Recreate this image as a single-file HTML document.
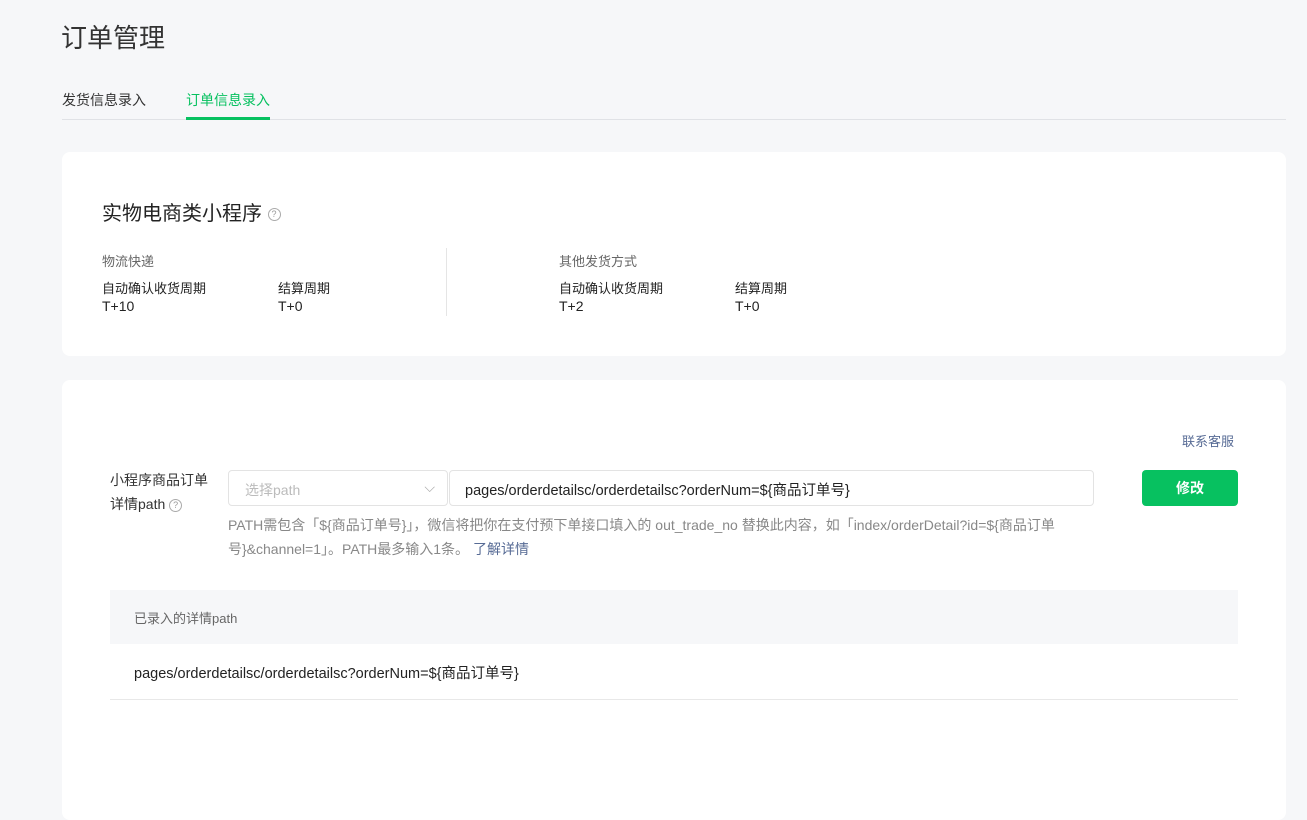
<!DOCTYPE html>
<html><head><meta charset="utf-8"><style>
*{margin:0;padding:0;box-sizing:border-box}
body{width:1307px;height:802px;overflow:hidden;background:#f6f7f9;font-family:"Liberation Sans","Noto Sans CJK SC",sans-serif;color:#222;position:relative}
.a{position:absolute;white-space:nowrap}
.card{position:absolute;background:#fff;border-radius:8px}
.q{display:inline-block;width:13px;height:13px;border:1px solid #aaa;border-radius:50%;font-size:9px;line-height:11px;text-align:center;color:#999;vertical-align:middle}
</style></head><body>
<div class="a" style="left:61px;top:18px;font-size:26px;color:#333">订单管理</div>
<div class="a" style="left:62px;top:90px;font-size:14px;color:#333">发货信息录入</div>
<div class="a" style="left:186px;top:90px;font-size:14px;color:#07c160">订单信息录入</div>
<div class="a" style="left:62px;top:119px;width:1224px;height:1px;background:#e0e2e6"></div>
<div class="a" style="left:186px;top:117px;width:84px;height:3px;background:#07c160"></div>

<div class="card" style="left:62px;top:152px;width:1224px;height:204px"></div>
<div class="a" style="left:102px;top:197px;font-size:20px;color:#222">实物电商类小程序 <span class="q">?</span></div>
<div class="a" style="left:102px;top:251px;font-size:13px;color:#666">物流快递</div>
<div class="a" style="left:102px;top:278px;font-size:13px">自动确认收货周期</div>
<div class="a" style="left:278px;top:278px;font-size:13px">结算周期</div>
<div class="a" style="left:102px;top:298px;font-size:14px">T+10</div>
<div class="a" style="left:278px;top:298px;font-size:14px">T+0</div>
<div class="a" style="left:446px;top:248px;width:1px;height:68px;background:#e5e5e5"></div>
<div class="a" style="left:559px;top:251px;font-size:13px;color:#666">其他发货方式</div>
<div class="a" style="left:559px;top:278px;font-size:13px">自动确认收货周期</div>
<div class="a" style="left:735px;top:278px;font-size:13px">结算周期</div>
<div class="a" style="left:559px;top:298px;font-size:14px">T+2</div>
<div class="a" style="left:735px;top:298px;font-size:14px">T+0</div>

<div class="card" style="left:62px;top:380px;width:1224px;height:440px"></div>
<div class="a" style="left:1182px;top:431px;font-size:13px;color:#576b95">联系客服</div>
<div class="a" style="left:110px;top:468px;font-size:14px;line-height:24px;color:#333;white-space:normal;width:110px">小程序商品订单<br>详情path <span class="q">?</span></div>
<div class="a" style="left:228px;top:470px;width:220px;height:36px;border:1px solid #e3e3e3;border-radius:4px;font-size:14px;color:#bbb;padding:9px 16px">选择path<span style="position:absolute;right:12px;top:8px;color:#aaa">⌵</span></div>
<div class="a" style="left:449px;top:470px;width:645px;height:36px;border:1px solid #e3e3e3;border-radius:4px;font-size:14.5px;color:#222;padding:8px 15px">pages/orderdetailsc/orderdetailsc?orderNum=${商品订单号}</div>
<div class="a" style="left:1142px;top:470px;width:96px;height:36px;background:#07c160;border-radius:4px;color:#fff;font-size:14px;text-align:center;line-height:36px;font-weight:bold">修改</div>
<div class="a" style="left:228px;top:513px;font-size:14px;line-height:24px;color:#888;white-space:normal;width:870px">PATH需包含「${商品订单号}」，微信将把你在支付预下单接口填入的 out_trade_no 替换此内容，如「index/orderDetail?id=${商品订单号}&amp;channel=1」。PATH最多输入1条。 <span style="color:#576b95">了解详情</span></div>
<div class="a" style="left:110px;top:590px;width:1128px;height:54px;background:#f6f7f9;font-size:13px;color:#666;padding:18px 24px">已录入的详情path</div>
<div class="a" style="left:110px;top:644px;width:1128px;height:56px;border-bottom:1px solid #e8e8e8;font-size:14.5px;color:#222;padding:18px 24px">pages/orderdetailsc/orderdetailsc?orderNum=${商品订单号}</div>
</body></html>
